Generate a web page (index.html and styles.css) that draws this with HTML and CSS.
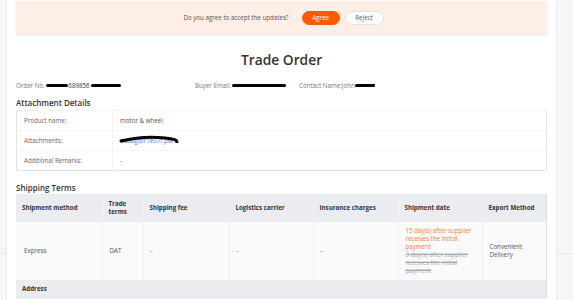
FILE: index.html
```html
<!DOCTYPE html>
<html>
<head>
<meta charset="utf-8">
<link rel="stylesheet" href="styles.css">
</head>
<body>
<div class="page">
  <div class="banner">
    <span class="banner-text">Do you agree to accept the updates?</span>
    <button class="btn btn-agree">Agree</button>
    <button class="btn btn-reject">Reject</button>
  </div>

  <h1 class="title">Trade Order</h1>

  <div class="info">
    <div class="info-item info-order">Order No. <span class="redact r1"></span><span class="digits">689856</span><span class="redact r2"></span></div>
    <div class="info-item info-email">Buyer Email: <span class="redact r3"></span></div>
    <div class="info-item info-contact">Contact Name:John<span class="redact r4"></span></div>
  </div>

  <h2 class="section">Attachment Details</h2>
  <table class="attach">
    <colgroup><col class="c-label"><col></colgroup>
    <tr class="row-a"><td class="lbl">Product name:</td><td class="val">motor &amp; wheel</td></tr>
    <tr class="row-b"><td class="lbl">Attachments:</td><td class="val"><span class="link-wrap"><a class="link">aabbgdfr1e07f.pdf</a><svg class="scribble" width="60" height="8" viewBox="0 0 60 8"><path d="M2 6 C 14 3, 30 1, 46 3 S 56 6, 58 7" stroke="#000" stroke-width="3" fill="none" stroke-linecap="round"/></svg></span></td></tr>
    <tr class="row-c"><td class="lbl">Additional Remarks:</td><td class="val">-</td></tr>
  </table>

  <h2 class="section section-ship">Shipping Terms</h2>
  <table class="ship">
    <colgroup>
      <col class="w86"><col class="w41"><col class="w86"><col class="w84"><col class="w85"><col class="w84"><col>
    </colgroup>
    <tr class="head">
      <th>Shipment method</th>
      <th>Trade terms</th>
      <th>Shipping fee</th>
      <th>Logistics carrier</th>
      <th>Insurance charges</th>
      <th>Shipment date</th>
      <th>Export Method</th>
    </tr>
    <tr class="data">
      <td>Express</td>
      <td>DAT</td>
      <td>-</td>
      <td>-</td>
      <td>-</td>
      <td class="date"><div class="new">15 day(s) after supplier receives the initial payment</div><div class="old">3 day(s) after supplier receives the initial payment</div></td>
      <td>Convenient Delivery</td>
    </tr>
    <tr class="addr"><th colspan="7">Address</th></tr>
  </table>
</div>
</body>
</html>
```
FILE: styles.css
```css
html, body {
  margin: 0;
  padding: 0;
}
body {
  font-family: "Open Sans", "Noto Sans", sans-serif;
  background:
    linear-gradient(#e6e7ea, #e6e7ea) 0 253px / 100% 1px no-repeat,
    #f5f6f8;
  height: 300px;
  overflow: hidden;
  color: #333;
}
.page {
  margin-left: 6px;
  width: 551px;
  min-height: 300px;
  background: #fff;
  border-left: 1px solid #e8e9ec;
  border-right: 1px solid #e8e9ec;
  padding: 1px 9px 0 9px;
  box-sizing: border-box;
}
.banner {
  height: 33px;
  background: #fdefe6;
  box-shadow: 0 1px 2px rgba(0,0,0,0.12);
  display: flex;
  align-items: center;
  justify-content: center;
  padding-left: 4px;
}
.banner-text {
  font-size: 6.2px;
  color: #555;
  margin-right: 13px;
}
.btn {
  font-family: "Open Sans", sans-serif;
  font-size: 6.2px;
  height: 14px;
  border-radius: 7px;
  padding: 0;
  line-height: 12px;
}
.btn-agree {
  width: 38px;
  background: #ff5a00;
  color: #fff;
  border: 1px solid #ff5a00;
  margin-right: 5px;
}
.btn-reject {
  width: 39px;
  background: #fff;
  color: #555;
  border: 1px solid #e2e2e2;
}
.title {
  margin: 16px 0 0 0;
  font-size: 13.8px;
  line-height: 20px;
  font-weight: 600;
  text-align: center;
  color: #333;
}
.info {
  display: flex;
  margin-top: 11px;
  height: 10px;
  font-size: 6.2px;
  line-height: 10px;
  color: #777;
}
.info-order { width: 179px; }
.info-email { width: 104px; }
.redact {
  display: inline-block;
  height: 3.5px;
  background: #000;
  border-radius: 2px;
  vertical-align: 1px;
}
.r1 { width: 22px; }
.r2 { width: 30px; margin-left: 1px; }
.r3 { width: 54px; }
.r4 { width: 20px; border-radius: 3px 1px 2px 2px; }
.digits { color: #333; }
.section {
  margin: 6px 0 0 0;
  font-size: 8px;
  line-height: 12px;
  font-weight: 600;
  color: #333;
}
.section-ship { margin-top: 11px; }
table {
  width: 531px;
  border-collapse: collapse;
  table-layout: fixed;
  margin-top: 1px;
  font-size: 6.2px;
}
.attach {
  border: 1px solid #e3e3e3;
}
.c-label { width: 96px; }
.attach td {
  border-top: 1px solid #f3f3f3;
  padding: 0 0 0 7px;
  color: #666;
  height: 19px;
}
.attach .val { border-left: 1px solid #f3f3f3; color: #555; }
.link-wrap { position: relative; display: inline-block; }
.link { color: #3b7ddd; }
.scribble {
  position: absolute;
  left: -1px;
  top: -1px;
}
.ship {
  border-right: 1px solid #dedfe3;
  margin-top: 0;
}
.w86 { width: 86px; }
.w41 { width: 41px; }
.w84 { width: 84px; }
.w85 { width: 85px; }
.ship th {
  background: #ebecf0;
  text-align: left;
  font-weight: 700;
  color: #333;
  padding: 0 4px 0 6px;
  line-height: 8.5px;
  border-left: 1px solid #f2f3f5;
}
.ship .head th { height: 28px; }
.ship .head th:first-child { border-left: none; }
.ship .data td {
  background: #fafafa;
  height: 58px;
  padding: 0 4px 0 7px;
  color: #555;
  line-height: 8px;
  border-left: 1px solid #f0f0f0;
}
.ship .data td:first-child { border-left: none; padding-left: 8px; }
.date .new { color: #f77b39; }
.date .old { color: #aaa; text-decoration: line-through; }
.ship .addr th {
  height: 19px;
  border-left: none;
  padding-left: 6px;
}
```
